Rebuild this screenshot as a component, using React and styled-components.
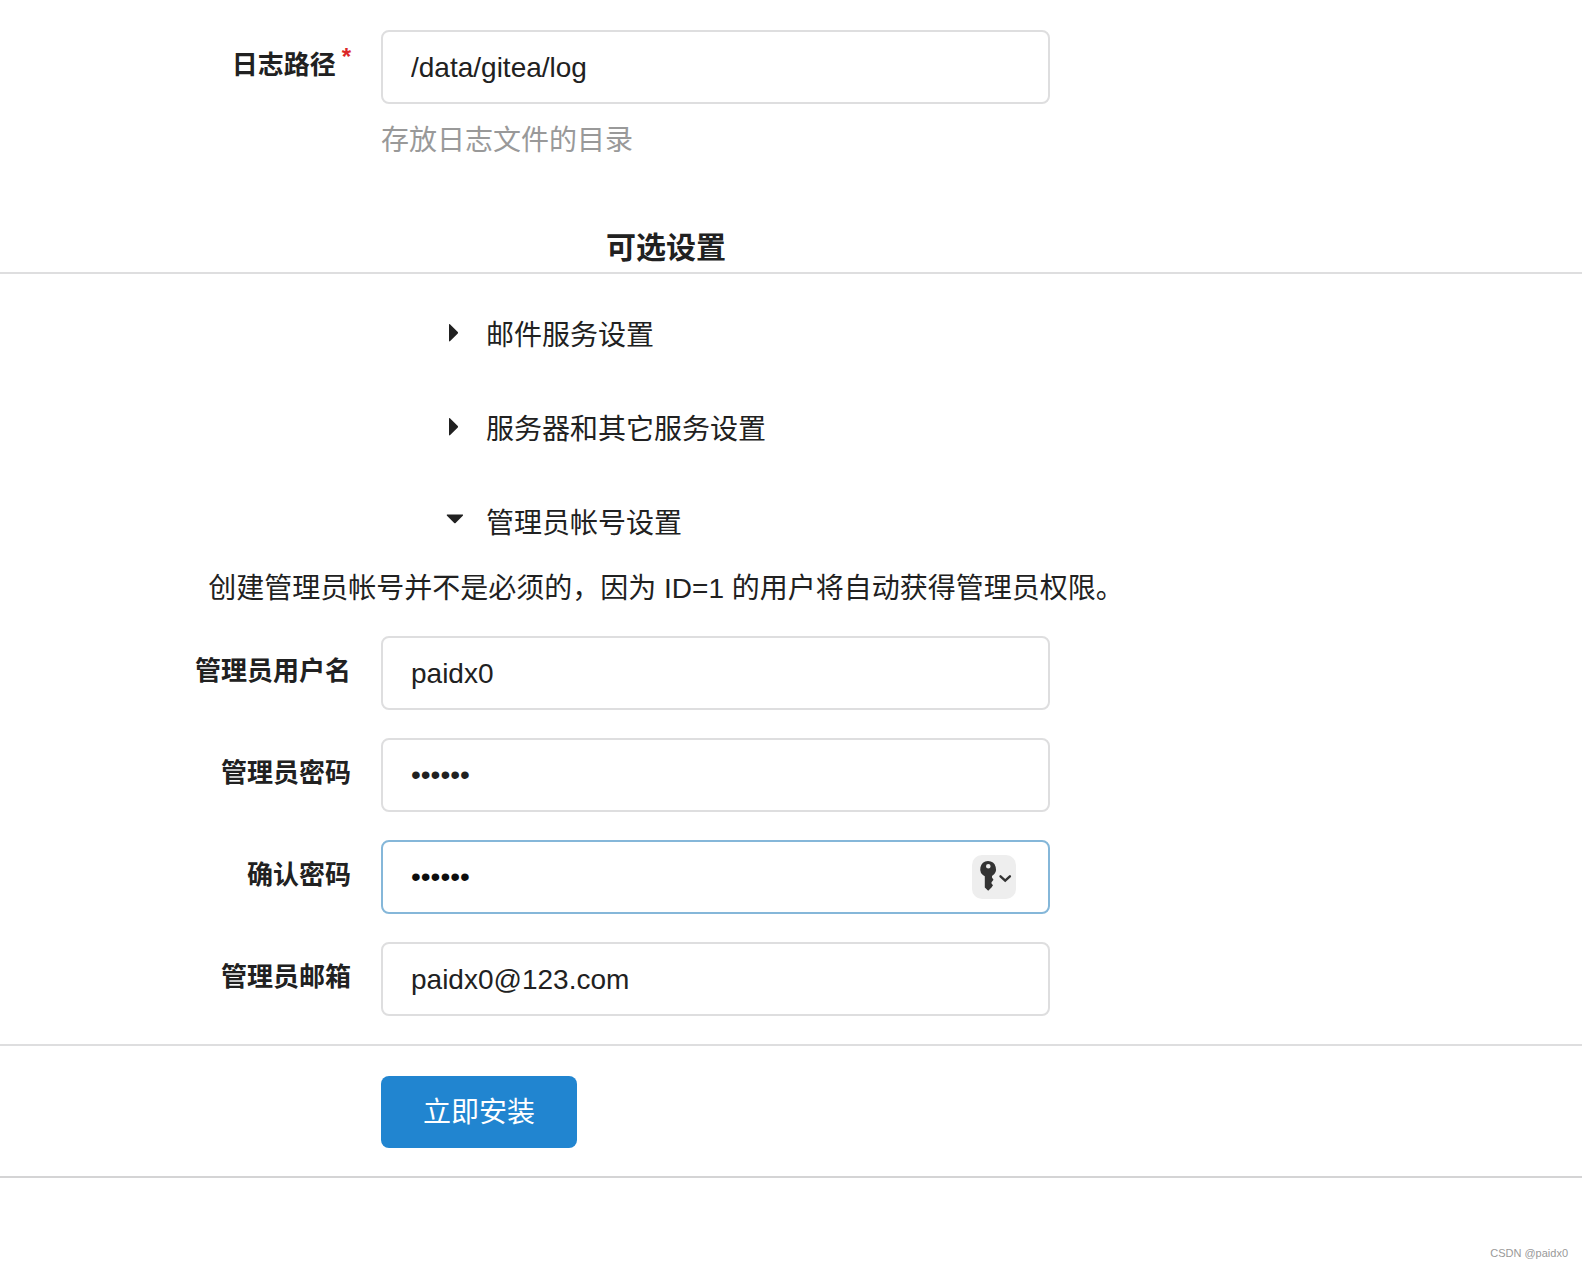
import React from "react";
import styled, { createGlobalStyle } from "styled-components";

const GlobalStyle = createGlobalStyle`
  *, *::before, *::after { box-sizing: border-box; }
  body {
    margin: 0;
    background: #ffffff;
    color: #212121;
    font-family: "Liberation Sans", "Noto Sans CJK SC", sans-serif;
    font-size: 28px;
    line-height: 36px;
  }
`;

const Page = styled.div`
  display: flex;
  flex-direction: column;
  min-height: 100vh;
  padding-top: 30px;
`;

const Content = styled.div`
  max-width: 1332px;
`;

const FieldRow = styled.div`
  display: grid;
  grid-template-columns: 351px minmax(0, 669px);
  column-gap: 30px;
`;

const FieldList = styled.div`
  display: grid;
  row-gap: 28px;
  margin-top: 29px;
`;

const Label = styled.label`
  padding-top: 17px;
  text-align: right;
  font-size: 26px;
  font-weight: 700;
`;

const Required = styled.span`
  display: inline-block;
  margin-left: 6px;
  color: #db2828;
  font-size: 24px;
  line-height: 20px;
  vertical-align: top;
`;

const InputWrap = styled.div`
  position: relative;
`;

const Input = styled.input`
  display: block;
  width: 100%;
  height: 74px;
  padding: ${(p) => (p.type === "password" ? "0" : "2px")} 28px 0;
  border: 2px solid ${(p) => (p.$active ? "#85b7d9" : "#dededf")};
  border-radius: 8px;
  outline: none;
  background: #ffffff;
  color: ${(p) => (p.$active ? "#0d0d0d" : "#212121")};
  font: inherit;
`;

const Help = styled.p`
  margin: 19px 0 0;
  color: #999999;
`;

const SectionHeader = styled.header`
  margin-top: 69px;
  border-bottom: 2px solid #dededf;
`;

const SectionTitle = styled.h4`
  max-width: 1332px;
  margin: 0;
  padding-bottom: 4px;
  text-align: center;
  font-size: 30px;
  font-weight: 700;
  line-height: 40px;
`;

const Sections = styled.div`
  display: grid;
  row-gap: 58px;
  max-width: 1332px;
  padding: 44px 0 28px;
`;

const Summary = styled.summary`
  display: flex;
  align-items: center;
  gap: 22px;
  padding-left: 446px;
  list-style: none;
  cursor: pointer;
`;

const Caret = styled.svg`
  flex: none;
  width: 18px;
  height: 34px;
  fill: #212121;
`;

const Note = styled.p`
  margin: 29px 0 0;
  text-align: center;
`;

const KeyButton = styled.button`
  position: absolute;
  top: 15px;
  right: 34px;
  width: 44px;
  height: 44px;
  padding: 0;
  border: 0;
  border-radius: 10px;
  background: #eeeeee;
  cursor: pointer;

  svg {
    display: block;
  }
`;

const Actions = styled.div`
  padding: 30px 0 28px 381px;
  border: solid #dededf;
  border-width: 2px 0;
  border-bottom-color: #d4d4d5;
`;

const Submit = styled.button`
  display: block;
  height: 72px;
  padding: 2px 42px 0;
  border: 0;
  border-radius: 8px;
  background: #2185d0;
  color: #ffffff;
  font: inherit;
  cursor: pointer;
`;

const Watermark = styled.footer`
  margin-top: auto;
  padding: 0 14px 6px;
  text-align: right;
  color: #999999;
  font-size: 11px;
  line-height: 18px;
`;

function Field({ id, label, required, type = "text", value, active, help, children }) {
  return (
    <FieldRow>
      <Label htmlFor={id}>
        {label}
        {required && <Required>*</Required>}
      </Label>
      <div>
        <InputWrap>
          <Input id={id} type={type} defaultValue={value} required={required} $active={active} />
          {children}
        </InputWrap>
        {help && <Help>{help}</Help>}
      </div>
    </FieldRow>
  );
}

function Section({ title, open, children }) {
  return (
    <details open={open}>
      <Summary>
        <Caret viewBox="0 0 18 34" aria-hidden="true">
          {open ? (
            <path d="M1.400 7.500h15c.7 0 .9.7.4 1.200l-7.200 7.300c-.4.4-1 .4-1.400 0L1 8.700c-.5-.5-.3-1.200.4-1.200z" />
          ) : (
            <path d="M3 5.800c0-.7.7-.9 1.200-.4l7.600 7.600c.4.4.4 1 0 1.400l-7.600 7.700c-.5.5-1.200.3-1.200-.4z" />
          )}
        </Caret>
        <span>{title}</span>
      </Summary>
      {children}
    </details>
  );
}

function KeyIcon() {
  return (
    <svg width="44" height="44" viewBox="0 0 44 44" aria-hidden="true">
      <path
        fill="#333333"
        fillRule="evenodd"
        d="M16 6a8 8 0 0 1 4 14.900v1.600l1.500 2.300-2 2.400v1.200l1.500 1.900-1.500 2.200-3.300 3.200-3.400-3.200V21.200A8 8 0 0 1 16 6zm.3 2.900a2.300 2.300 0 1 0 0 4.600 2.300 2.300 0 0 0 0-4.600z"
      />
      <path
        d="M28.500 21.300l4.700 4.400 4.700-4.400"
        fill="none"
        stroke="#333333"
        strokeWidth="2.400"
        strokeLinecap="round"
      />
    </svg>
  );
}

export default function App() {
  return (
    <>
      <GlobalStyle />
      <Page>
        <form onSubmit={(e) => e.preventDefault()}>
          <Content>
            <Field id="log-path" label="日志路径" required value="/data/gitea/log" help="存放日志文件的目录" />
          </Content>
          <SectionHeader>
            <SectionTitle>可选设置</SectionTitle>
          </SectionHeader>
          <Sections>
            <Section title="邮件服务设置" />
            <Section title="服务器和其它服务设置" />
            <Section title="管理员帐号设置" open>
              <Note>创建管理员帐号并不是必须的，因为 ID=1 的用户将自动获得管理员权限。</Note>
              <FieldList>
                <Field id="admin-name" label="管理员用户名" value="paidx0" />
                <Field id="admin-password" label="管理员密码" type="password" value="paidx0" />
                <Field id="admin-confirm" label="确认密码" type="password" value="paidx0" active>
                  <KeyButton type="button" aria-label="密码">
                    <KeyIcon />
                  </KeyButton>
                </Field>
                <Field id="admin-email" label="管理员邮箱" type="email" value="paidx0@123.com" />
              </FieldList>
            </Section>
          </Sections>
          <Actions>
            <Submit type="submit">立即安装</Submit>
          </Actions>
        </form>
        <Watermark>CSDN @paidx0</Watermark>
      </Page>
    </>
  );
}
